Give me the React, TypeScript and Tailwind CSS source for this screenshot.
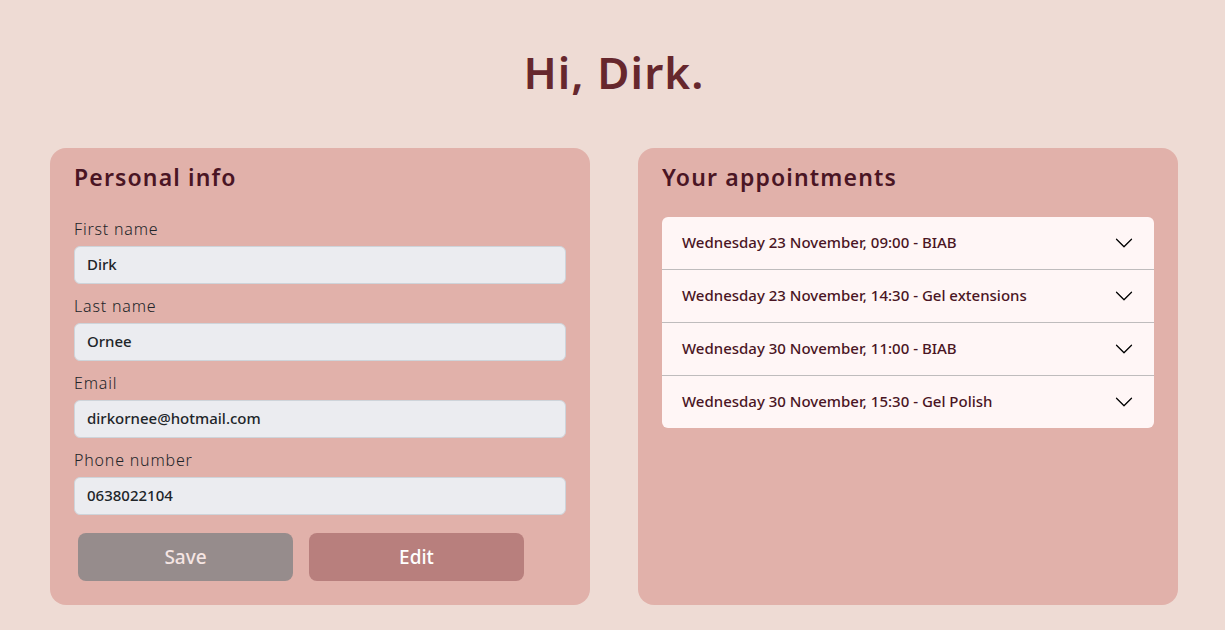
import { useState } from "react";

const fields = [
  { id: "first-name", label: "First name", type: "text", value: "Dirk" },
  { id: "last-name", label: "Last name", type: "text", value: "Ornee" },
  { id: "email", label: "Email", type: "email", value: "dirkornee@hotmail.com" },
  { id: "phone", label: "Phone number", type: "tel", value: "0638022104" },
];

const appointments = [
  "Wednesday 23 November, 09:00 - BIAB",
  "Wednesday 23 November, 14:30 - Gel extensions",
  "Wednesday 30 November, 11:00 - BIAB",
  "Wednesday 30 November, 15:30 - Gel Polish",
];

function Chevron({ open }: { open: boolean }) {
  return (
    <svg
      viewBox="0 0 16 16"
      className={open ? "size-5 shrink-0 rotate-180" : "size-5 shrink-0"}
      fill="#000"
      aria-hidden="true"
    >
      <path
        fillRule="evenodd"
        d="M1.646 4.646a.5.5 0 0 1 .708 0L8 10.293l5.646-5.647a.5.5 0 0 1 .708.708l-6 6a.5.5 0 0 1-.708 0l-6-6a.5.5 0 0 1 0-.708z"
      />
    </svg>
  );
}

function PersonalInfo() {
  const [editing, setEditing] = useState(false);
  return (
    <section className="rounded-2xl bg-[#e1b1aa] px-6 pt-[15px] pb-6">
      <h2 className="mb-[26px] text-[23px] leading-7 font-semibold tracking-wider text-[#4a1524]">
        Personal info
      </h2>
      <form onSubmit={(e) => e.preventDefault()}>
        <div className="flex flex-col gap-2.5">
          {fields.map((f) => (
            <div key={f.id} className="flex flex-col gap-[5px]">
              <label htmlFor={f.id} className="text-base leading-6 font-light tracking-wider text-[#212529]">
                {f.label}
              </label>
              <input
                id={f.id}
                type={f.type}
                defaultValue={f.value}
                readOnly={!editing}
                className="h-[38px] w-full rounded-md border border-[#ced4da] bg-[#ebecf0] px-3 pb-0.5 text-[15px] font-medium text-[#212529]"
              />
            </div>
          ))}
        </div>
        <div className="mt-[18px] flex gap-4 px-1">
          <button
            type="submit"
            disabled={!editing}
            className="h-12 w-[215px] rounded-lg bg-[#968c8c] text-[19px] font-medium text-[#f5e5e3]"
          >
            Save
          </button>
          <button
            type="button"
            onClick={() => setEditing(!editing)}
            className="h-12 w-[215px] rounded-lg bg-[#b87f7d] text-[19px] font-medium text-white"
          >
            Edit
          </button>
        </div>
      </form>
    </section>
  );
}

function Appointments() {
  const [open, setOpen] = useState<number | null>(null);
  return (
    <section className="rounded-2xl bg-[#e1b1aa] px-6 pt-[15px] pb-6">
      <h2 className="mb-[26px] text-[23px] leading-7 font-semibold tracking-wider text-[#4a1524]">
        Your appointments
      </h2>
      <ul className="divide-y divide-[#bfbcbd] overflow-hidden rounded-md bg-[#fff6f6]">
        {appointments.map((name, i) => (
          <li key={name}>
            <button
              type="button"
              aria-expanded={open === i}
              onClick={() => setOpen(open === i ? null : i)}
              className="flex min-h-[52px] w-full items-center justify-between px-5 text-left text-[15px] font-medium text-[#4a1524]"
            >
              <span className="pb-0.5">{name}</span>
              <Chevron open={open === i} />
            </button>
          </li>
        ))}
      </ul>
    </section>
  );
}

export default function App() {
  return (
    <main className="min-h-screen bg-[#eedbd4] pt-[42px] pr-[47px] pb-[25px] pl-[50px] font-['Noto_Sans',sans-serif]">
      <h1 className="mb-[46px] text-center text-[44px] leading-[60px] font-semibold tracking-wide text-[#66272d]">
        Hi, Dirk.
      </h1>
      <div className="grid grid-cols-2 gap-12">
        <PersonalInfo />
        <Appointments />
      </div>
    </main>
  );
}
